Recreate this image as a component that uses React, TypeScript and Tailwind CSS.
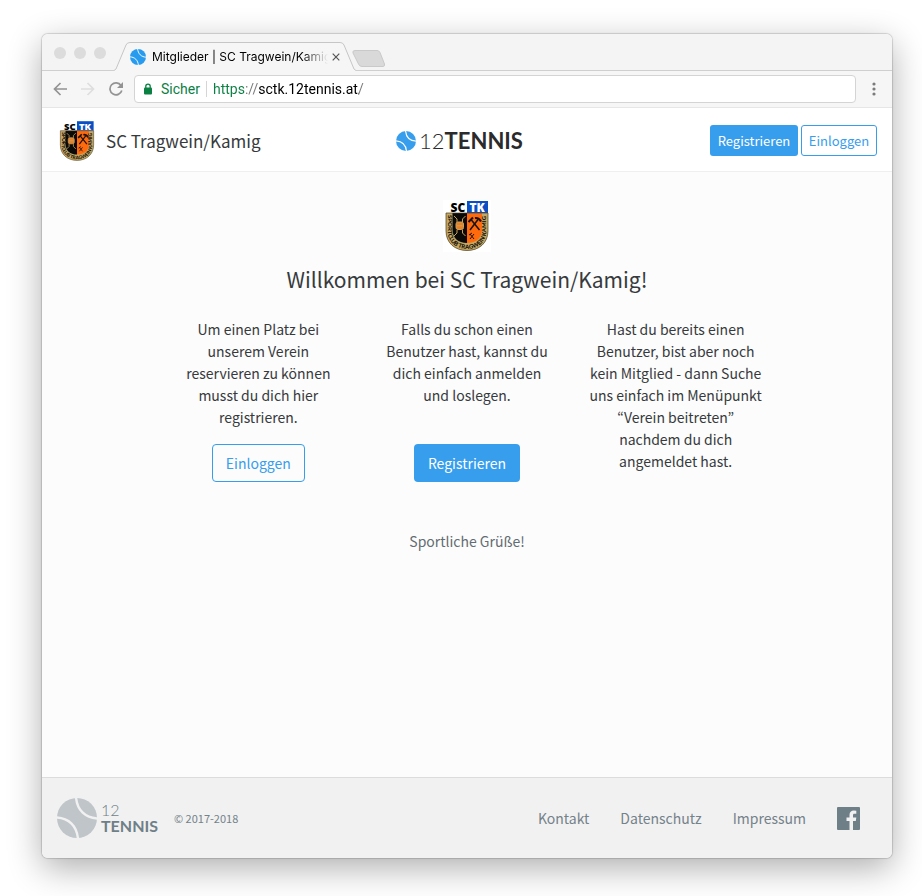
import { useId } from "react";

const sans = "font-['Noto_Sans_CJK_KR',sans-serif]";

function Ball({ className, lineClass }: { className: string; lineClass: string }) {
  return (
    <svg viewBox="0 0 40 40" className={className} aria-hidden="true">
      <circle cx="20" cy="20" r="20" fill="currentColor" />
      <g fill="none" strokeWidth="2.4" className={lineClass}>
        <path d="M19 -1C20 12 28 20 41 20.500" />
        <path d="M-1 19.500C12 20 20 28 21 41" />
      </g>
    </svg>
  );
}

function Crest({ className }: { className: string }) {
  const id = useId();
  return (
    <svg viewBox="0 0 48 52" className={className} role="img" aria-label="SC Tragwein/Kamig Wappen">
      <rect width="48" height="52" fill="#fff" />
      <rect x="24" y="1" width="21" height="12" fill="#0b4fc4" />
      <text x="7.500" y="11.500" fontSize="12" fontWeight="900" fontFamily="Open Sans, sans-serif" fill="#000">SC</text>
      <text x="26.500" y="11.500" fontSize="12" fontWeight="900" fontFamily="Open Sans, sans-serif" fill="#fff">TK</text>
      <path d="M3 13H45V31C45 43 36 50.500 24 50.500S3 43 3 31Z" fill="#c4a763" />
      <path d="M9.500 13H24V43C15 43 9.500 38 9.500 29Z" fill="#0b0a09" />
      <path d="M24 13H39V29C39 38 33 43 24 43Z" fill="#ff6a0d" />
      <g stroke="#c7a25c" strokeWidth="1" fill="none">
        <rect x="13" y="22" width="7.500" height="7.500" rx="2" fill="#e98028" />
        <path d="M11 16L14 19V22M22.500 16L19.500 19V22M11 36L14 33V30M22.500 36L19.500 33V30M14 25.700H19.500" />
      </g>
      <g stroke="#18120e" strokeWidth="1.500" fill="none">
        <path d="M27 30L35 19.500M36.500 30L28 19.500" />
        <path d="M25.500 22L30 17.500M32 18Q36 17.500 38 21.500" strokeWidth="2" />
        <path d="M27 39L31 34M31 39L27 34M26 35L29 33" strokeWidth="1" />
      </g>
      <path id={id} d="M4.500 15V31C5 43 14 49 24 49S43 43 43.500 31V15" fill="none" />
      <text fontSize="6" fontWeight="900" fontFamily="Lato, sans-serif" fill="#17110a">
        <textPath href={"#" + id}>SPORTCLUB TRAGWEIN KAMIG</textPath>
      </text>
      <path d="M3 13H45V31C45 43 36 50.500 24 50.500S3 43 3 31Z" fill="none" stroke="#4b3c22" strokeWidth="0.700" />
    </svg>
  );
}

function TabStrip() {
  return (
    <div className="flex h-[37px] items-end rounded-t-md border-b border-[#cfcfcf] bg-[#f4f4f4]">
      <div className="flex gap-2 self-center pt-0.5 pl-3">
        <button aria-label="Schließen" className="size-3 rounded-full bg-[#dcdcdc]" />
        <button aria-label="Minimieren" className="size-3 rounded-full bg-[#dcdcdc]" />
        <button aria-label="Maximieren" className="size-3 rounded-full bg-[#dcdcdc]" />
      </div>
      <div className="relative -mb-px ml-2 flex h-[29px] w-[242px] items-center pr-3.5 pl-4">
        <svg viewBox="0 0 242 29" className="absolute inset-0 h-full w-full" aria-hidden="true">
          <path d="M0 28.500L2 27L12 3Q13 .5 16 .5H226Q229 .5 230 3L240 27L242 28.500V29H0Z" fill="#f6f6f6" />
          <path d="M0 28.500L2 27L12 3Q13 .5 16 .5H226Q229 .5 230 3L240 27L242 28.500" fill="none" stroke="#c6c6c6" />
        </svg>
        <Ball className="relative size-4 shrink-0 text-[#289bef]" lineClass="stroke-white" />
        <span className="relative ml-1.5 min-w-0 flex-1 overflow-hidden mask-r-from-85% font-['Inter',sans-serif] text-xs whitespace-nowrap text-black">
          Mitglieder | SC Tragwein/Kamig
        </span>
        <button aria-label="Tab schließen" className="relative ml-0.5 p-0.5 text-[#555]">
          <svg viewBox="0 0 8 8" className="size-2" aria-hidden="true">
            <path d="M.7.7L7.300 7.300M7.300.7L.7 7.300" stroke="currentColor" strokeWidth="1.200" />
          </svg>
        </button>
      </div>
      <button aria-label="Neuer Tab" className="-ml-1 mb-[3px]">
        <svg viewBox="0 0 34 17" className="h-[17px] w-[34px]" aria-hidden="true">
          <path d="M3 .5H25Q27 .5 28 2.500L32.500 14Q33 16.500 31 16.500H10Q7.500 16.500 6.500 14L1 3Q.2.5 3 .5Z" fill="#d9d9d9" stroke="#c9c9c9" />
        </svg>
      </button>
    </div>
  );
}

function Toolbar() {
  return (
    <div className="flex h-[37px] items-center border-b border-[#e6e6e6] bg-[#f6f6f6] pr-4 pl-[11px] font-['Roboto',sans-serif]">
      <button aria-label="Zurück" className="text-[#939393]">
        <svg viewBox="0 0 14 14" className="size-3.5" fill="none" stroke="currentColor" strokeWidth="1.700" aria-hidden="true">
          <path d="M14 7H1.500M7.500 1L1.500 7L7.500 13" />
        </svg>
      </button>
      <button aria-label="Vorwärts" className="ml-3.5 text-[#dedede]">
        <svg viewBox="0 0 14 14" className="size-3.5" fill="none" stroke="currentColor" strokeWidth="1.700" aria-hidden="true">
          <path d="M0 7H12.500M6.500 1L12.500 7L6.500 13" />
        </svg>
      </button>
      <button aria-label="Neu laden" className="ml-3.5 text-[#939393]">
        <svg viewBox="0 0 14 14" className="size-3.5" aria-hidden="true">
          <path d="M12 3.500A6 6 0 1 0 12.800 8.500" fill="none" stroke="currentColor" strokeWidth="1.700" />
          <path d="M14 0V6H8Z" fill="currentColor" />
        </svg>
      </button>
      <div className="ml-[11px] flex h-7 min-w-0 flex-1 items-center rounded border border-[#d4d4d4] bg-white pl-2 text-sm">
        <svg viewBox="0 0 10 12" className="h-3 w-2.5 shrink-0 text-[#0b8043]" aria-hidden="true">
          <rect x="1" y="4.500" width="8" height="7" rx="1" fill="currentColor" />
          <path d="M2.800 5V3.300a2.200 2.200 0 0 1 4.400 0V5" fill="none" stroke="currentColor" strokeWidth="1.300" />
        </svg>
        <span className="ml-2 text-[#0b8043]">Sicher</span>
        <span className="mx-1.5 h-4 w-px bg-[#d5d5d5]" />
        <input
          aria-label="Adresse"
          defaultValue="https://sctk.12tennis.at/"
          className="min-w-0 flex-1 bg-linear-[90deg,#0b8043_33px,#777_33px,#777_46px,#000_46px,#000_146px,#777_146px] bg-clip-text text-transparent outline-none"
        />
      </div>
      <button aria-label="Menü" className="ml-4 text-[#7b7b7b]">
        <svg viewBox="0 0 4 14" className="h-3.5 w-1" fill="currentColor" aria-hidden="true">
          <circle cx="2" cy="2" r="1.600" />
          <circle cx="2" cy="7" r="1.600" />
          <circle cx="2" cy="12" r="1.600" />
        </svg>
      </button>
    </div>
  );
}

function Header() {
  return (
    <header className="grid h-16 grid-cols-[1fr_auto_1fr] items-center border-b border-[#edeff1] bg-white pt-0.5 pr-[15px] pl-4">
      <a href="#start" className="flex items-center gap-2.5 text-[17px] leading-7 text-[#373a3c]">
        <Crest className="h-[42px] w-[38px]" />
        SC Tragwein/Kamig
      </a>
      <a href="#home" className="mr-4 flex items-center gap-[3px] font-['Lato',sans-serif] text-[22px] leading-7 text-[#2b2b2b]">
        <Ball className="size-5 text-[#379ded]" lineClass="stroke-white" />
        <span>
          <span className="font-light">12</span>
          <span className="font-bold">TENNIS</span>
        </span>
      </a>
      <div className="flex justify-end gap-[3px] text-[13px] leading-5">
        <button className="h-[31px] w-[88px] rounded-[3px] bg-[#379ded] text-white">Registrieren</button>
        <button className="h-[31px] w-[76px] rounded-[3px] border border-[#379ded] bg-white text-[#379ded]">Einloggen</button>
      </div>
    </header>
  );
}

function Welcome() {
  return (
    <main className="flex flex-1 flex-col items-center px-6 pt-7 text-sm leading-[22px] text-[#373a3c]">
      <Crest className="h-[52px] w-12" />
      <h1 className="mt-[11px] text-[21px] leading-8">Willkommen bei SC Tragwein/Kamig!</h1>
      <div className="mt-[23px] grid w-full max-w-[594px] grid-cols-3 gap-8 text-center">
        <section>
          <p className="min-h-[110px]">Um einen Platz bei unserem Verein reservieren zu können musst du dich hier registrieren.</p>
          <button className="mt-4 h-[38px] w-[93px] rounded border border-[#379ded] text-[#379ded]">Einloggen</button>
        </section>
        <section>
          <p className="min-h-[110px]">Falls du schon einen Benutzer hast, kannst du dich einfach anmelden und loslegen.</p>
          <button className="mt-4 h-[38px] w-[106px] rounded bg-[#379ded] text-white">Registrieren</button>
        </section>
        <section>
          <p>
            Hast du bereits einen Benutzer, bist aber noch kein Mitglied - dann Suche uns einfach im Menüpunkt “Verein beitreten” nachdem du dich angemeldet hast.
          </p>
        </section>
      </div>
      <p className="mt-12 text-[#636c72]">Sportliche Grüße!</p>
    </main>
  );
}

function Footer() {
  return (
    <footer className="flex h-[81px] items-center rounded-b-md border-t border-[#dcdcdc] bg-[#f1f1f1] pr-8 pl-[15px] text-sm leading-5 text-[#74828a]">
      <Ball className="size-10 text-[#bfc5c8]" lineClass="stroke-[#f1f1f1]" />
      <div className="ml-1 font-['Lato',sans-serif] text-base leading-4 text-[#6f7f88]">
        <div className="font-light">12</div>
        <div className="font-bold">TENNIS</div>
      </div>
      <span className="ml-4 text-[11px]">© 2017-2018</span>
      <nav className="ml-auto flex items-center gap-[31px]">
        <a href="#kontakt">Kontakt</a>
        <a href="#datenschutz">Datenschutz</a>
        <a href="#impressum">Impressum</a>
        <a href="#facebook" aria-label="Facebook">
          <svg viewBox="0 0 23 23" className="size-[23px]" aria-hidden="true">
            <rect width="23" height="23" rx="1" fill="#6f7f88" />
            <path d="M12.500 23V14H9.500V10.500H12.500V8C12.500 5 14.200 3.500 16.800 3.500L19.300 3.700V6.800H17.500C16.200 6.800 16 7.500 16 8.400V10.500H19.300L18.800 14H16V23Z" fill="#f1f1f1" />
          </svg>
        </a>
      </nav>
    </footer>
  );
}

export default function App() {
  return (
    <div className={`flex min-h-screen bg-white pt-[34px] pr-[30px] pb-[38px] pl-[42px] ${sans}`}>
      <div className="flex min-w-0 flex-1 flex-col rounded-md bg-[#fcfcfc] shadow-[0_0_1px_1px_rgba(0,0,0,0.15),0_10px_34px_rgba(0,0,0,0.32)]">
        <TabStrip />
        <Toolbar />
        <Header />
        <Welcome />
        <Footer />
      </div>
    </div>
  );
}
